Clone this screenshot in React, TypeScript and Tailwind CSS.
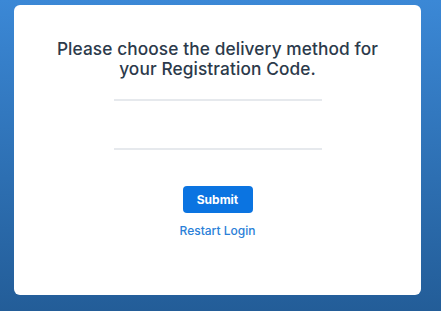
import React from 'react';

export default function App() {
  return (
    <div className="min-h-[311px] w-full bg-gradient-to-b from-[#3b88d6] to-[#235d98] pl-[14px] pr-[20px] pt-[5px] pb-[16px] font-['Inter',sans-serif]">
      <div className="flex h-[290px] flex-col items-center rounded-[6px] bg-white pt-[34px]">
        <h1 className="text-center text-[17.3px] leading-[20px] font-medium tracking-[0.1px] text-[#2c3a4b]">
          Please choose the delivery method for
          <br />
          your Registration Code.
        </h1>
        <div className="mt-[20px] h-[2px] w-[208px] bg-[#e6e9ed]" />
        <div className="h-[47px]" />
        <div className="h-[2px] w-[208px] bg-[#e6e9ed]" />
        <button className="mt-[36px] h-[27px] w-[70px] rounded-[4px] bg-[#0b74e1] text-[12px] font-bold text-white">
          Submit
        </button>
        <a href="#" className="mt-[10px] text-[12px] leading-[15px] font-medium text-[#2a80d8]">
          Restart Login
        </a>
      </div>
    </div>
  );
}
